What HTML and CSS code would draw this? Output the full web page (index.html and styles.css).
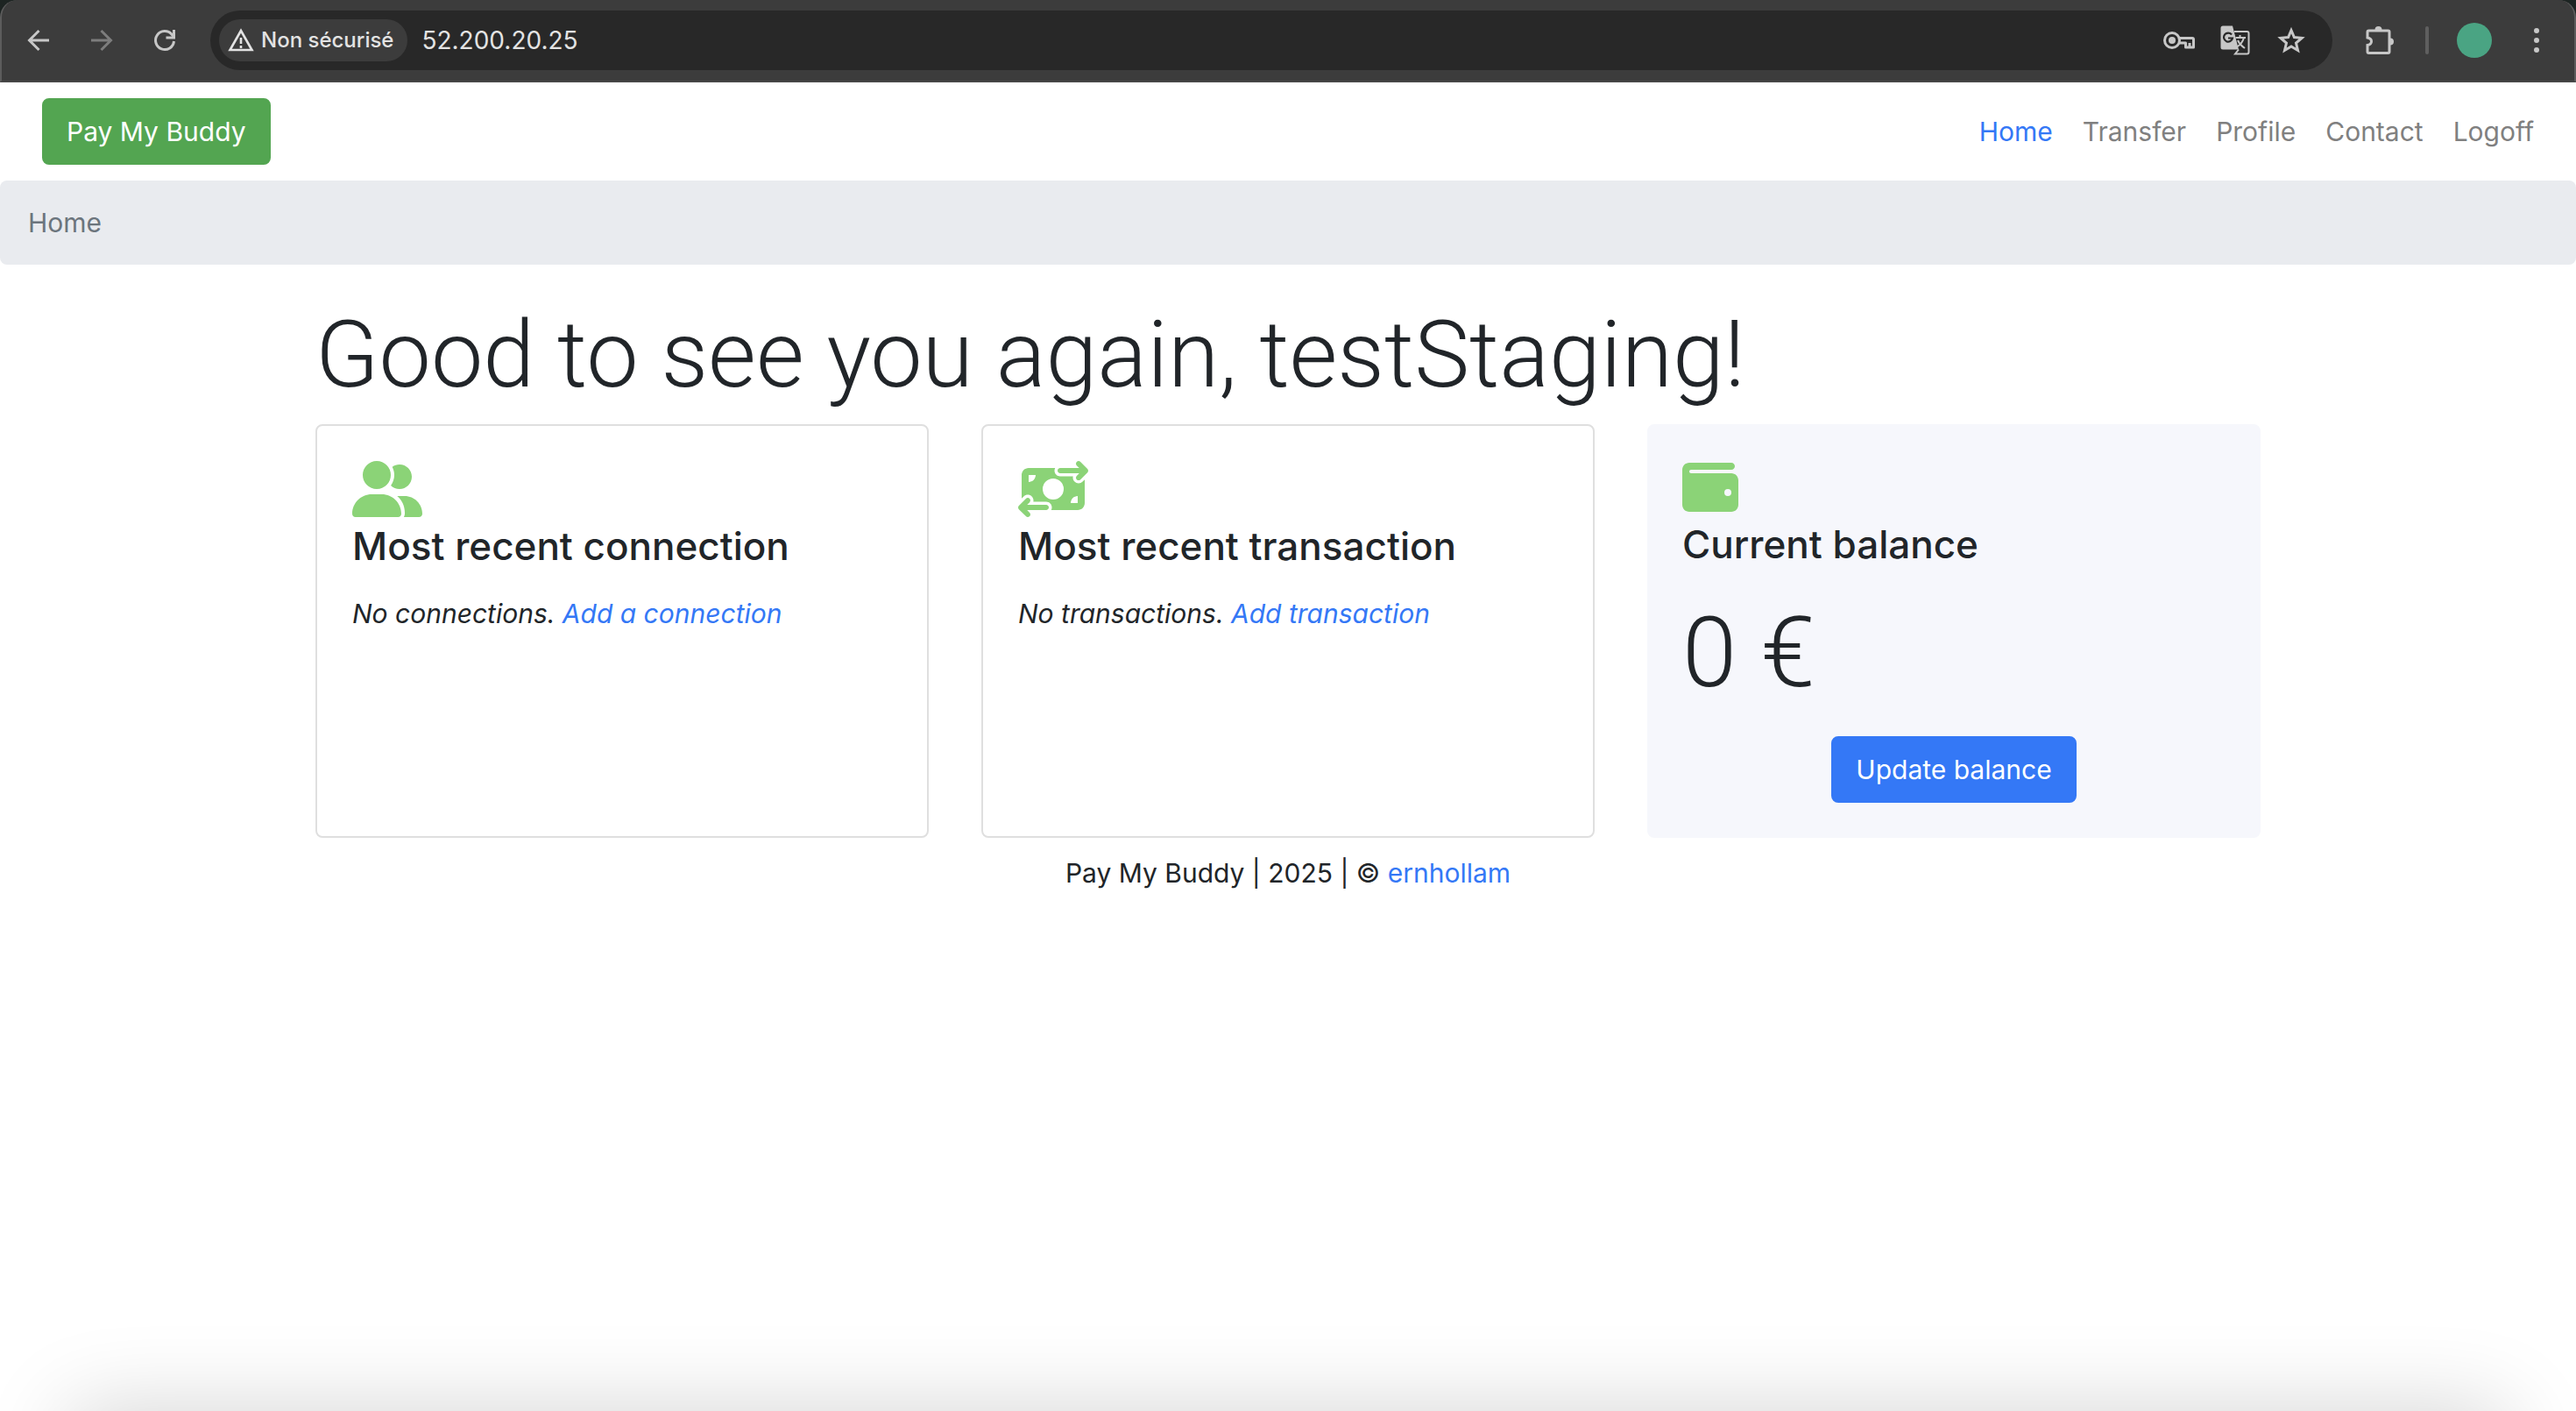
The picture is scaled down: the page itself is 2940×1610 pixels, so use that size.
FILE: index.html
```html
<!DOCTYPE html>
<html lang="en">
<head>
  <meta charset="utf-8">
  <title>Pay My Buddy</title>
  <link rel="stylesheet" href="styles.css">
</head>
<body>
  <div class="chrome">
    <div class="toolbar">
      <button class="tool" type="button" aria-label="Back">
        <svg width="32" height="32" viewBox="0 0 32 32" fill="none" stroke="#c7c7c7" stroke-width="3"><path d="M29 16H7M17.500 5L6.500 16l11 11"/></svg>
      </button>
      <button class="tool" type="button" aria-label="Forward" disabled>
        <svg width="32" height="32" viewBox="0 0 32 32" fill="none" stroke="#7d7d7d" stroke-width="3"><path d="M5 16h22M16.500 5l11 11-11 11"/></svg>
      </button>
      <button class="tool" type="button" aria-label="Reload">
        <svg width="32" height="32" viewBox="0 0 32 32" fill="none" stroke="#c7c7c7" stroke-width="3"><path d="M27.500 17A10.500 10.500 0 1 1 25 9.200L27 11.500"/><path d="M27.500 4v9h-9" /></svg>
      </button>
      <div class="address">
        <button class="chip" type="button">
          <svg width="30" height="30" viewBox="0 0 30 30" fill="none" stroke="#e3e3e3" stroke-width="2.600"><path d="M15 4L27.500 26h-25z"/><path d="M15 12v7M15 21v3"/></svg>
          Non sécurisé
        </button>
        <input class="url" type="text" value="52.200.20.25" aria-label="Address">
        <div class="actions">
          <button class="tool" type="button" aria-label="Passwords">
            <svg width="36" height="36" viewBox="0 0 36 36" fill="none" stroke="#c7c7c7" stroke-width="3"><circle cx="10" cy="18" r="8.500"/><circle cx="10" cy="18" r="4" fill="#c7c7c7" stroke="none"/><path d="M17.500 15.500H33a1.500 1.500 0 0 1 1.500 1.500v9h-9v-5H17.500M30 21v5" stroke-linejoin="round"/></svg>
          </button>
          <button class="tool" type="button" aria-label="Translate">
            <svg width="34" height="34" viewBox="0 0 34 34" fill="none"><path d="M3 .500h11l7 27H3a2.500 2.500 0 0 1-2.500-2.500V3A2.500 2.500 0 0 1 3 .500z" fill="#c7c7c7"/><path d="M16 7h14.500a2 2 0 0 1 2 2v21.500a2 2 0 0 1-2 2H17l4-5" stroke="#c7c7c7" stroke-width="2"/><path d="M13 10.500a5 5 0 1 0 1 4h-5" stroke="#282828" stroke-width="2.200"/><path d="M17.500 14H29M22.500 11v3M27 14c-1.500 5-4.500 8.500-8 10.500M20 17c1.500 3.500 4.500 6.500 8 9" stroke="#c7c7c7" stroke-width="2"/></svg>
          </button>
          <button class="tool" type="button" aria-label="Bookmark this page">
            <svg width="34" height="34" viewBox="0 0 34 34" fill="none" stroke="#c7c7c7" stroke-width="3"><path d="M17 5.500l3.400 8 8.700.800-6.600 5.700 2 8.500-7.500-4.500-7.500 4.500 2-8.500-6.600-5.700 8.700-.800z"/></svg>
          </button>
        </div>
      </div>
      <button class="tool" type="button" aria-label="Extensions">
        <svg width="36" height="36" viewBox="0 0 36 36" fill="none"><path d="M6.500 7h22a1.500 1.500 0 0 1 1.500 1.500V31a1.500 1.500 0 0 1-1.500 1.500h-22A1.500 1.500 0 0 1 5 31v-7.500c6-1 6-7.500 0-8.500V8.500A1.500 1.500 0 0 1 6.500 7z" stroke="#c7c7c7" stroke-width="3"/><path d="M13.500 6a4 4 0 0 1 8 0zM31 15.500a4 4 0 0 1 0 8z" fill="#c7c7c7"/></svg>
      </button>
      <span class="divider"></span>
      <button class="avatar" type="button" aria-label="Profile"></button>
      <button class="tool" type="button" aria-label="Menu">
        <svg width="32" height="32" viewBox="0 0 32 32" fill="#c7c7c7"><circle cx="16" cy="5" r="3"/><circle cx="16" cy="16" r="3"/><circle cx="16" cy="27" r="3"/></svg>
      </button>
    </div>
  </div>

  <nav class="navbar">
    <a class="btn btn-success" href="#">Pay My Buddy</a>
    <ul class="nav">
      <li><a class="active" href="#">Home</a></li>
      <li><a href="#">Transfer</a></li>
      <li><a href="#">Profile</a></li>
      <li><a href="#">Contact</a></li>
      <li><a href="#">Logoff</a></li>
    </ul>
  </nav>

  <ol class="breadcrumb"><li>Home</li></ol>

  <main class="container">
    <h1 class="display">Good to see you again, testStaging!</h1>
    <div class="deck">
      <section class="card">
        <svg class="icon" width="80" height="64" viewBox="0 0 640 512"><path d="M96 128a128 128 0 1 1 256 0A128 128 0 1 1 96 128zM0 482.300C0 383.800 79.800 304 178.300 304l91.400 0C368.200 304 448 383.800 448 482.300c0 16.400-13.300 29.700-29.700 29.700L29.700 512C13.300 512 0 498.700 0 482.300zM609.300 512l-137.800 0c5.400-9.400 8.600-20.300 8.600-32l0-8c0-60.700-27.100-115.200-69.800-151.800c2.400-.1 4.700-.2 7.100-.2l61.400 0C567.800 320 640 392.200 640 481.300c0 17-13.800 30.700-30.700 30.700zM432 256c-31 0-59-12.600-79.300-32.900C372.400 196.500 384 163.600 384 128c0-26.800-6.600-52.100-18.300-74.300C384.300 40.100 407.200 32 432 32c61.900 0 112 50.100 112 112s-50.100 112-112 112z"/></svg>
        <h4>Most recent connection</h4>
        <p><em>No connections. <a href="#">Add a connection</a></em></p>
      </section>
      <section class="card">
        <svg class="icon" width="80" height="64" viewBox="0 0 640 512"><path d="M535 41c-9.400-9.400-9.400-24.600 0-33.900s24.600-9.400 33.900 0l64 64c4.500 4.500 7 10.600 7 17s-2.500 12.500-7 17l-64 64c-9.400 9.400-24.600 9.400-33.900 0s-9.400-24.600 0-33.900l23-23L384 112c-13.300 0-24-10.700-24-24s10.700-24 24-24l174.100 0L535 41zM105 377l-23 23L256 400c13.300 0 24 10.700 24 24s-10.700 24-24 24L81.900 448l23 23c9.400 9.400 9.400 24.600 0 33.900s-24.600 9.400-33.900 0L7 441c-4.500-4.500-7-10.600-7-17s2.500-12.500 7-17l64-64c9.400-9.400 24.600-9.400 33.900 0s9.400 24.600 0 33.900zM96 64l241.900 0c-3.700 7.200-5.900 15.300-5.900 24c0 28.700 23.300 52 52 52l117.400 0c-4 17 .6 35.500 13.800 48.800c20.300 20.300 53.200 20.300 73.500 0L608 169.500 608 384c0 35.300-28.700 64-64 64l-241.900 0c3.700-7.200 5.900-15.300 5.900-24c0-28.700-23.300-52-52-52l-117.400 0c4-17-.6-35.500-13.800-48.800c-20.300-20.300-53.200-20.300-73.500 0L32 342.500 32 128c0-35.300 28.700-64 64-64zm64 64l-64 0 0 64c35.300 0 64-28.700 64-64zM544 320c-35.300 0-64 28.700-64 64l64 0 0-64zM320 352a96 96 0 1 0 0-192 96 96 0 1 0 0 192z"/></svg>
        <h4>Most recent transaction</h4>
        <p><em>No transactions. <a href="#">Add transaction</a></em></p>
      </section>
      <section class="card card-light">
        <svg class="icon" width="64" height="64" viewBox="0 0 512 512"><path d="M64 32C28.700 32 0 60.700 0 96L0 416c0 35.300 28.700 64 64 64l384 0c35.300 0 64-28.700 64-64l0-224c0-35.300-28.700-64-64-64L80 128c-8.800 0-16-7.200-16-16s7.200-16 16-16l368 0c17.700 0 32-14.300 32-32s-14.300-32-32-32L64 32zM416 272a32 32 0 1 1 0 64 32 32 0 1 1 0-64z"/></svg>
        <h4>Current balance</h4>
        <div class="display balance">0 €</div>
        <button class="btn btn-primary" type="button">Update balance</button>
      </section>
    </div>
  </main>

  <footer class="footer">Pay My Buddy | 2025 | © <a href="#">ernhollam</a></footer>
  <div class="window-shadow"></div>
</body>
</html>
```

FILE: styles.css
```css
* { box-sizing: border-box; }

body {
  margin: 0;
  background: #fff;
  color: #212529;
  font: 400 30px/48px Inter, "Liberation Sans", sans-serif;
}

a { color: #3478f6; text-decoration: none; }
button, input { font: inherit; color: inherit; }

/* Browser toolbar */
.chrome { background: #1d2422; }

.toolbar {
  display: flex;
  align-items: center;
  height: 94px;
  padding: 0 24px 0 22px;
  border: solid #5c5c5c;
  border-width: 0 2px 2px;
  border-bottom-color: #474747;
  border-radius: 20px 20px 0 0;
  background: #3c3c3c;
}

.tool {
  display: flex;
  align-items: center;
  justify-content: center;
  width: 38px;
  padding: 0;
  border: 0;
  background: none;
}

.toolbar > .tool { margin-right: 34px; }

.address {
  display: flex;
  flex: 1;
  align-items: center;
  height: 68px;
  margin-right: 34px;
  padding: 0 28px 0 10px;
  border-radius: 34px;
  background: #282828;
}

.chip {
  display: flex;
  align-items: center;
  gap: 8px;
  height: 48px;
  padding: 0 16px 0 10px;
  border: 0;
  border-radius: 24px;
  background: #3c3c3c;
  color: #e3e3e3;
  font-size: 24px;
  font-weight: 500;
  line-height: 48px;
  white-space: nowrap;
}

.url {
  flex: 1;
  min-width: 0;
  padding: 0 16px;
  border: 0;
  background: none;
  color: #e3e3e3;
  font-size: 28px;
}

.actions { display: flex; gap: 26px; }
.divider { width: 4px; height: 32px; border-radius: 2px; background: #5f5f5f; }

.avatar {
  width: 40px;
  height: 40px;
  margin: 0 32px;
  padding: 0;
  border: 0;
  border-radius: 50%;
  background: #4aa483;
}

.toolbar > .tool:last-child { margin-right: 0; }

/* Site header */
.navbar {
  display: flex;
  align-items: center;
  justify-content: space-between;
  padding: 18px 48px;
}

.btn {
  display: inline-block;
  padding: 12px 26px;
  border: 2px solid transparent;
  border-radius: 8px;
  color: #fff;
}

.btn-success { border-color: #53a551; background: #53a551; }
.btn-primary { border-color: #3478f6; background: #3478f6; }

.nav {
  display: flex;
  gap: 34px;
  margin: 0;
  padding: 0;
  list-style: none;
}

.nav a { color: #808080; }
.nav a.active { color: #3478f6; }

.breadcrumb {
  margin: 0 0 32px;
  padding: 24px 32px;
  border-radius: 8px;
  background: #e9ebef;
  color: #6c757d;
  list-style: none;
}

/* Dashboard */
.container {
  max-width: 2280px;
  margin: 0 auto;
  padding: 0 30px;
}

.display {
  margin: 0;
  padding-top: 4px;
  font-family: Roboto, "Liberation Sans", sans-serif;
  font-size: 112px;
  font-weight: 300;
  line-height: 134px;
}

h1.display {
  margin-bottom: 12px;
  font-size: 106px;
}

.deck {
  display: grid;
  grid-template-columns: repeat(3, 1fr);
  gap: 60px;
}

.card {
  padding: 40px;
  border: 2px solid #dfdfdf;
  border-radius: 8px;
}

.card-light { border: 0; background: #f6f7fc; }
.icon { display: block; fill: #8bd377; }

h4 {
  margin: 4px 0 24px;
  font-size: 44px;
  font-weight: 500;
  line-height: 58px;
}

p { margin: 0; }
.balance { margin-bottom: 28px; }
.card .btn { display: block; margin: 0 auto; }
.footer { padding: 16px 0; text-align: center; }

/* Soft shade along the lower window edge */
.window-shadow {
  position: fixed;
  right: 80px;
  bottom: -100px;
  left: 80px;
  height: 100px;
  box-shadow: 0 0 100px rgba(0, 0, 0, 0.18);
}
```
